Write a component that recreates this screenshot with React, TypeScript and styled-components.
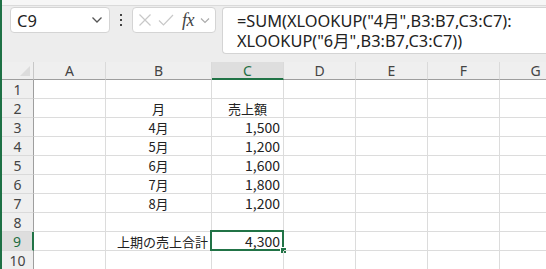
import React from "react";
import styled, { createGlobalStyle } from "styled-components";

const GlobalStyle = createGlobalStyle`
  html, body {
    margin: 0;
    padding: 0;
    background: #ffffff;
  }
  body {
    font-family: "Noto Sans", "Noto Sans CJK JP", sans-serif;
    width: 546px;
    height: 269px;
    overflow: hidden;
  }
`;

const Window = styled.div`
  width: 546px;
  height: 269px;
  box-sizing: border-box;
  border-left: 2px solid #1e7145;
  background: #ededed;
  overflow: hidden;
`;

const TopStrip = styled.div`
  height: 5px;
  background: #f6f6f6;
  border-bottom: 1px solid #dadada;
`;

const FormulaBar = styled.div`
  display: flex;
  align-items: flex-start;
  padding: 1px 0 0 8px;
  height: 50px;
  box-sizing: border-box;
`;

const NameBox = styled.div`
  width: 100px;
  height: 26px;
  box-sizing: border-box;
  background: #fff;
  border: 1px solid #d4d4d4;
  border-radius: 4px;
  display: flex;
  align-items: center;
  justify-content: space-between;
  padding: 0 6px 0 6px;
  font-size: 16.5px;
  color: #222;
`;

const Dots = styled.div`
  width: 22px;
  height: 26px;
  display: flex;
  align-items: center;
  justify-content: center;
`;

const ButtonBox = styled.div`
  width: 84px;
  height: 26px;
  box-sizing: border-box;
  background: #fff;
  border: 1px solid #d4d4d4;
  border-radius: 4px;
  display: flex;
  align-items: center;
  padding: 0 0 0 5px;
  gap: 6px;
`;

const Fx = styled.span`
  font-family: "Liberation Serif", serif;
  font-style: italic;
  font-size: 18px;
  color: #444;
  margin-left: 2px;
  letter-spacing: -0.5px;
`;

const FormulaBox = styled.div`
  flex: 1;
  margin-left: 6px;
  height: 47px;
  box-sizing: border-box;
  background: #fff;
  border: 1px solid #d4d4d4;
  border-right: none;
  border-radius: 4px 0 0 4px;
  padding: 3px 0 0 14px;
  font-size: 16.35px;
  line-height: 20px;
  color: #222;
  white-space: pre;
`;

const Sheet = styled.div`
  margin-top: 6px;
  display: grid;
  width: max-content;
  grid-template-columns: 32px 72px 106px 72px 72px 72px 72px 72px;
  grid-template-rows: 18px repeat(10, 19px);
  background: #fff;
  font-family: "Noto Sans CJK JP", sans-serif;
  color: #222;
`;

const Corner = styled.div`
  background: #efefef;
  border-right: 1px solid #c8c8c8;
  border-bottom: 1px solid #9e9e9e;
  box-sizing: border-box;
  position: relative;
  &::after {
    content: "";
    position: absolute;
    right: 3px;
    bottom: 3px;
    border-style: solid;
    border-width: 0 0 10px 10px;
    border-color: transparent transparent #dcdcdc transparent;
  }
`;

const ColHead = styled.div<{ $active?: boolean }>`
  background: ${(p) => (p.$active ? "#dedede" : "#efefef")};
  border-right: 1px solid #dadada;
  border-bottom: ${(p) => (p.$active ? "2px solid #217346" : "1px solid #9e9e9e")};
  box-sizing: border-box;
  display: flex;
  align-items: center;
  justify-content: center;
  font-size: 14px;
  color: ${(p) => (p.$active ? "#1e6f43" : "#444")};
  font-family: "Noto Sans", sans-serif;
`;

const RowHead = styled.div<{ $active?: boolean }>`
  background: ${(p) => (p.$active ? "#dedede" : "#efefef")};
  border-right: ${(p) => (p.$active ? "2px solid #217346" : "1px solid #9e9e9e")};
  border-bottom: 1px solid #dadada;
  box-sizing: border-box;
  display: flex;
  align-items: center;
  justify-content: center;
  font-size: 14px;
  color: ${(p) => (p.$active ? "#1e6f43" : "#444")};
  font-family: "Noto Sans", sans-serif;
`;

const Cell = styled.div<{
  $align?: "left" | "center" | "right";
  $selected?: boolean;
  $num?: boolean;
}>`
  border-right: 1px solid #dcdcdc;
  border-bottom: 1px solid #dcdcdc;
  box-sizing: border-box;
  display: flex;
  align-items: center;
  justify-content: ${(p) =>
    p.$align === "center" ? "center" : p.$align === "right" ? "flex-end" : "flex-start"};
  padding: 0 3px;
  white-space: nowrap;
  line-height: 1;
  font-size: ${(p) => (p.$num ? "14px" : "13px")};
  position: relative;
  ${(p) =>
    p.$selected &&
    `
    &::before {
      content: "";
      position: absolute;
      left: -2px;
      top: -2px;
      right: -1px;
      bottom: -1px;
      border: 2px solid #217346;
      pointer-events: none;
    }
    &::after {
      content: "";
      position: absolute;
      right: -4px;
      bottom: -4px;
      width: 7px;
      height: 7px;
      background: #217346;
      border: 1px solid #fff;
      box-sizing: border-box;
    }
  `}
`;

const Chevron = () => (
  <svg width="12" height="8" viewBox="0 0 12 8">
    <path d="M1.5 1.5 L6 6 L10.5 1.5" fill="none" stroke="#555" strokeWidth="1.3" />
  </svg>
);

const SmallChevron = () => (
  <svg width="10" height="7" viewBox="0 0 10 7">
    <path d="M1 1.5 L5 5.5 L9 1.5" fill="none" stroke="#aaa" strokeWidth="1.1" />
  </svg>
);

const DotsIcon = () => (
  <svg width="4" height="14" viewBox="0 0 4 14">
    <rect x="1" y="1" width="2" height="2" fill="#444" />
    <rect x="1" y="6" width="2" height="2" fill="#444" />
    <rect x="1" y="11" width="2" height="2" fill="#444" />
  </svg>
);

const CrossIcon = () => (
  <svg width="14" height="14" viewBox="0 0 14 14">
    <path d="M1.5 1.5 L12.5 12.5 M12.5 1.5 L1.5 12.5" stroke="#c8c8c8" strokeWidth="1.2" fill="none" />
  </svg>
);

const CheckIcon = () => (
  <svg width="16" height="14" viewBox="0 0 16 14">
    <path d="M1 7.5 L5.5 12 L15 2" stroke="#c8c8c8" strokeWidth="1.2" fill="none" />
  </svg>
);

const cols = ["A", "B", "C", "D", "E", "F", "G"];

type Row = { b?: string; c?: string; bAlign?: "center" | "right"; cAlign?: "center" | "right" };

const rows: Row[] = [
  {},
  { b: "月", c: "売上額", bAlign: "center", cAlign: "center" },
  { b: "4月", c: "1,500", bAlign: "center", cAlign: "right" },
  { b: "5月", c: "1,200", bAlign: "center", cAlign: "right" },
  { b: "6月", c: "1,600", bAlign: "center", cAlign: "right" },
  { b: "7月", c: "1,800", bAlign: "center", cAlign: "right" },
  { b: "8月", c: "1,200", bAlign: "center", cAlign: "right" },
  {},
  { b: "上期の売上合計", c: "4,300", bAlign: "right", cAlign: "right" },
  {},
];

const App = () => {
  return (
    <Window>
      <GlobalStyle />
      <TopStrip />
      <FormulaBar>
        <NameBox>
          <span>C9</span>
          <Chevron />
        </NameBox>
        <Dots>
          <DotsIcon />
        </Dots>
        <ButtonBox>
          <CrossIcon />
          <CheckIcon />
          <Fx>fx</Fx>
          <SmallChevron />
        </ButtonBox>
        <FormulaBox>
          {'=SUM(XLOOKUP("4月",B3:B7,C3:C7):\nXLOOKUP("6月",B3:B7,C3:C7))'}
        </FormulaBox>
      </FormulaBar>
      <Sheet>
        <Corner />
        {cols.map((c) => (
          <ColHead key={c} $active={c === "C"}>
            {c}
          </ColHead>
        ))}
        {rows.map((r, i) => (
          <React.Fragment key={i}>
            <RowHead $active={i === 8}>{i + 1}</RowHead>
            <Cell />
            <Cell $align={r.bAlign}>{r.b}</Cell>
            <Cell $align={r.cAlign} $num={r.cAlign === "right"} $selected={i === 8}>
              {r.c}
            </Cell>
            <Cell />
            <Cell />
            <Cell />
            <Cell />
          </React.Fragment>
        ))}
      </Sheet>
    </Window>
  );
};

export default App;
